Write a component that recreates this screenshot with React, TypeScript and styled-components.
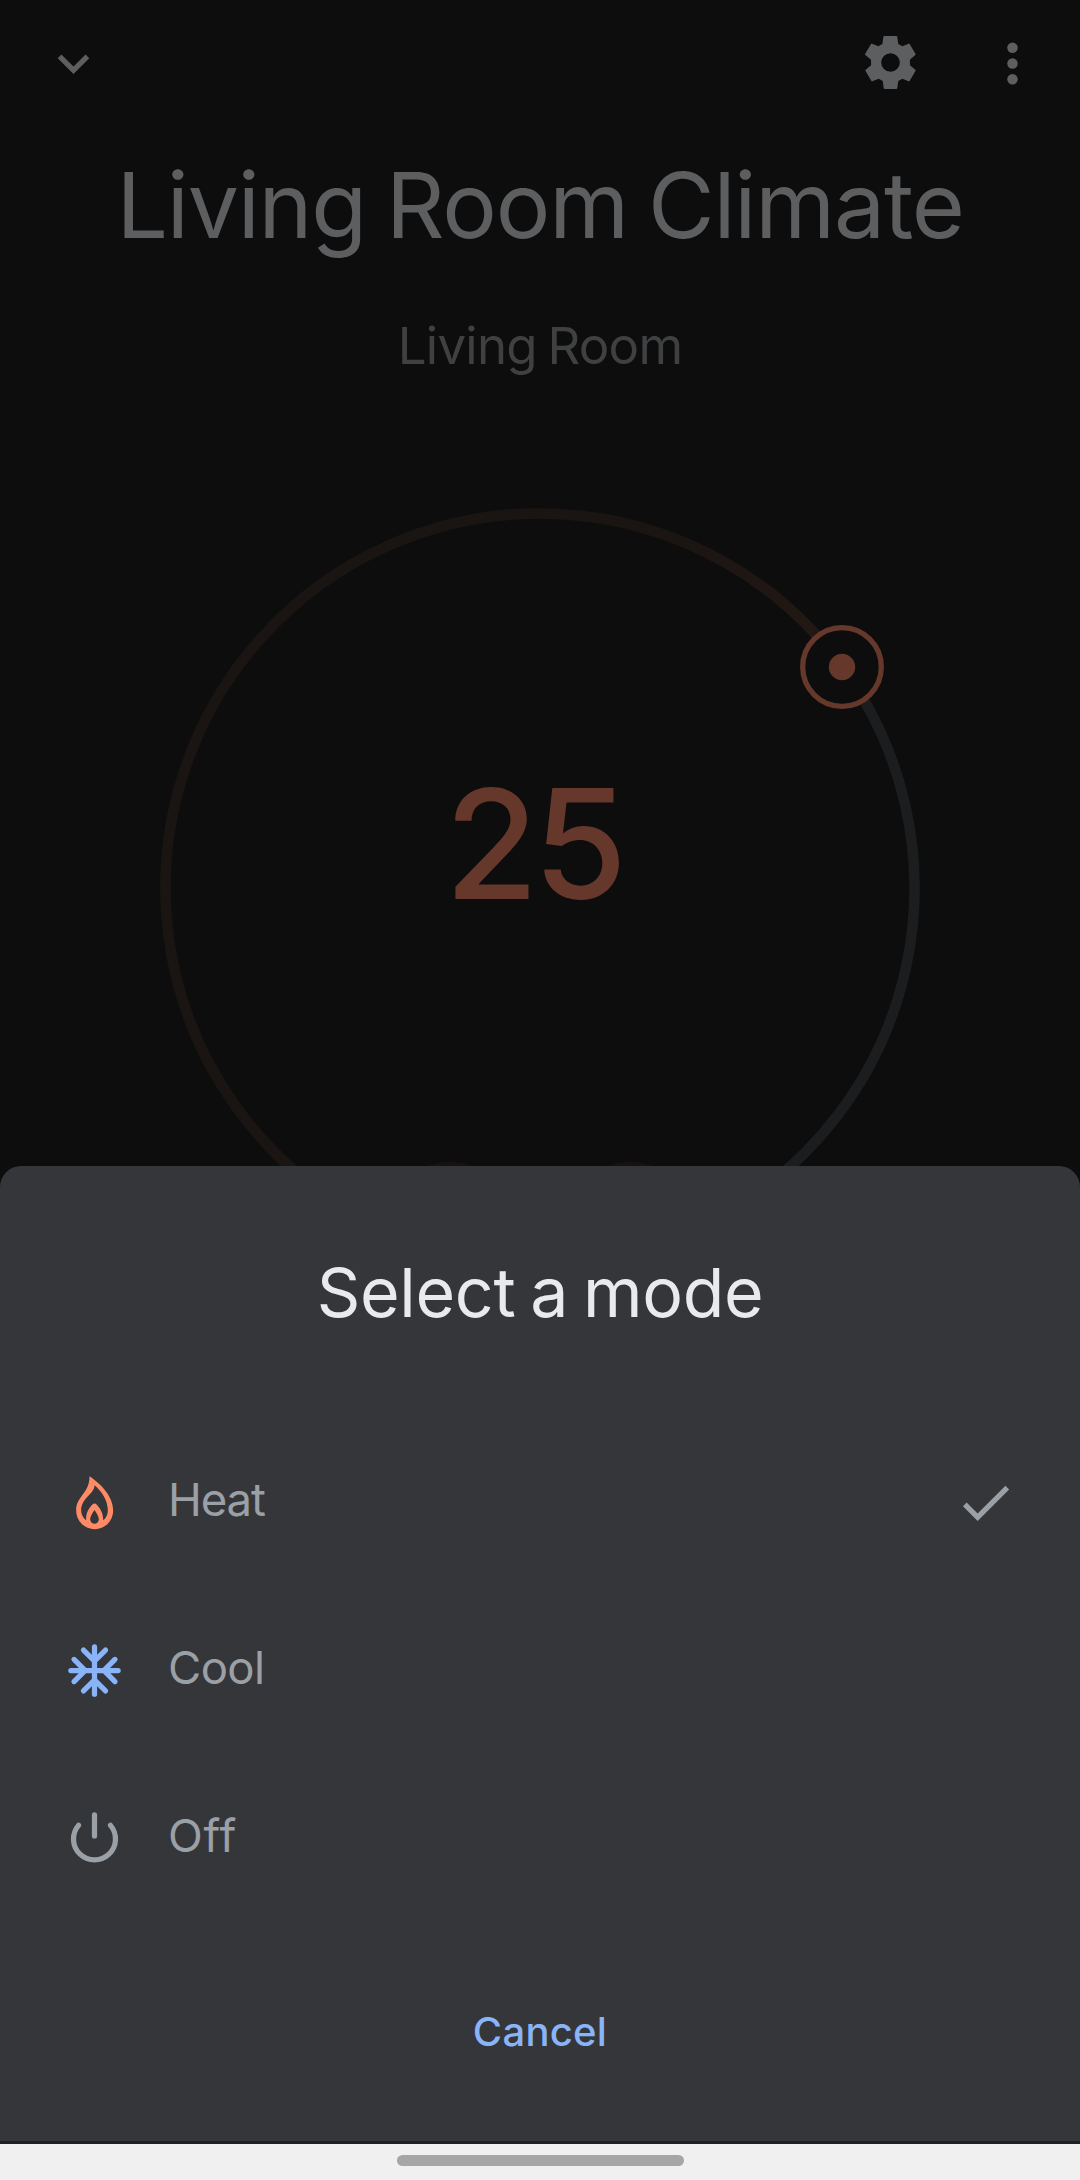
import React from "react";
import styled, { createGlobalStyle } from "styled-components";

const GlobalStyle = createGlobalStyle`
  *, *::before, *::after { box-sizing: border-box; }
  body {
    margin: 0;
    background: #0d0d0d;
    font-family: Inter, Roboto, "Liberation Sans", sans-serif;
    -webkit-font-smoothing: antialiased;
  }
  button { margin: 0; padding: 0; border: 0; background: none; font: inherit; color: inherit; }
  svg { display: block; }
`;

const Screen = styled.div`
  position: relative;
  width: 1080px;
  height: 2180px;
  overflow: hidden;
  background: #0d0d0d;
`;

const Page = styled.main`
  display: flex;
  flex-direction: column;
  align-items: center;
  color: #5d5e60;
`;

const TopBar = styled.header`
  display: flex;
  align-items: center;
  width: 100%;
  height: 127px;
  padding: 0 36px 0 42px;
`;

const Spacer = styled.div`
  flex: 1;
`;

const IconButton = styled.button<{ $gap?: number; $lift?: number }>`
  display: flex;
  width: 63px;
  height: 63px;
  margin-right: ${(p) => p.$gap ?? 0}px;
  margin-bottom: ${(p) => p.$lift ?? 0}px;
`;

const Icon = styled.svg`
  width: 63px;
  height: 63px;
  flex: none;
`;

const Title = styled.h1`
  margin: 23px 0 0;
  font-size: 91.2px;
  font-weight: 400;
  line-height: 110px;
  letter-spacing: -1.2px;
  word-spacing: -4.3px;
  white-space: nowrap;
`;

const RoomName = styled.div`
  margin-top: 56px;
  color: #3f4042;
  font-size: 51px;
  line-height: 60px;
  letter-spacing: -0.75px;
  word-spacing: -3px;
  white-space: nowrap;
`;

const Dial = styled.div`
  display: grid;
  place-items: center;
  width: 772px;
  height: 772px;
  margin-top: 126px;

  & > * { grid-area: 1 / 1; }
`;

const Ring = styled.svg`
  width: 772px;
  height: 772px;
  overflow: visible;
`;

const Temperature = styled.div`
  padding: 0 13px 89px 0;
  color: #65382b;
  font-size: 152px;
  font-weight: 500;
  line-height: 180px;
  letter-spacing: -5px;
`;

const Steppers = styled.div`
  display: flex;
  gap: 48px;
  margin-top: -112px;
`;

const Stepper = styled.button`
  width: 132px;
  height: 132px;
  border: 4px solid #171211;
  border-radius: 50%;
`;

const Overlay = styled.div`
  position: absolute;
  inset: 0;
  display: flex;
  flex-direction: column;
  justify-content: flex-end;
`;

const Sheet = styled.section`
  display: flex;
  flex-direction: column;
  height: 978px;
  padding-top: 86px;
  border-bottom: 3px solid #202124;
  border-radius: 21px 21px 0 0;
  background: #35363a;
`;

const SheetTitle = styled.h2`
  margin: 0;
  color: #e8eaed;
  font-size: 68px;
  font-weight: 400;
  line-height: 80px;
  letter-spacing: -0.3px;
  word-spacing: -4px;
  text-align: center;
`;

const ModeList = styled.div`
  display: flex;
  flex-direction: column;
  margin-top: 86px;
`;

const ModeRow = styled.button`
  display: flex;
  align-items: center;
  height: 168px;
  padding: 0 63px;
  color: #9aa0a6;
`;

const ModeLabel = styled.span<{ $tracking: number }>`
  flex: 1;
  margin-left: 42px;
  padding-bottom: 5px;
  font-size: 45.5px;
  line-height: 56px;
  letter-spacing: ${(p) => p.$tracking}px;
  text-align: left;
`;

const CancelButton = styled.button`
  align-self: center;
  height: 96px;
  margin-top: 61px;
  color: #8ab4f8;
  font-size: 40px;
  font-weight: 500;
  letter-spacing: 0.26px;
`;

const NavBar = styled.div`
  display: flex;
  justify-content: center;
  height: 36px;
  padding-top: 11px;
  background: #f0f0f0;
`;

const NavHandle = styled.div`
  width: 287px;
  height: 11px;
  border-radius: 6px;
  background: #a6a6a6;
`;

const ChevronIcon = () => (
  <Icon viewBox="0 0 24 24" fill="currentColor">
    <path d="M16.59 8.59L12 13.17 7.41 8.59 6 10l6 6 6-6z" />
  </Icon>
);

const GearIcon = () => (
  <Icon viewBox="11.5 9 189 189" fill="currentColor">
    <path
      fillRule="evenodd"
      d="M88 24h36q2 0 2.300 2l3 22 12 7 19-8q2-1 3 1l18 30q1 2-1 3l-16 14v17l16 13q2 1 1 3l-18 31q-1 2-3 1l-19-8-12 7-3 22q-.3 2-2.300 2H88q-2 0-2.300-2l-3-22-12-7-19 8q-2 1-3-1l-18-31q-1-2 1-3l16-13V95L30.700 81q-2-1-1-3l18-30q1-2 3-1l19 8 12-7 3-22q.3-2 2.300-2zM106 75.500a28 28 0 1 0 0 56 28 28 0 1 0 0-56z"
    />
  </Icon>
);

const MoreIcon = () => (
  <Icon viewBox="0 0 24 24" fill="currentColor">
    <circle cx="12" cy="6" r="2" />
    <circle cx="12" cy="12" r="2" />
    <circle cx="12" cy="18" r="2" />
  </Icon>
);

const FlameIcon = () => (
  <Icon viewBox="68.5 63 189 189" fill="#ff8b66">
    <path
      fillRule="evenodd"
      d="M148 79C171 94 219 133 219 182A55.500 55.500 0 0 1 108 182C108 138 148 132 148 79ZM163 106C163 133 123 143 123 182C123 193 129 204 138 211C136 188 148 173 156 164Q163 157 170 164C178 173 190 188 189 211C198 204 203 193 203 182C203 150 184 124 163 106ZM163 180C156 190 150 200 150 208A13 13 0 0 0 176 208C176 200 170 190 163 180Z"
    />
  </Icon>
);

const SnowIcon = () => (
  <Icon viewBox="0 0 24 24" fill="none" stroke="#8ab4f8" strokeWidth="2" strokeLinecap="round">
    <path d="M12 3v18M3 12h18M7.800 4.200L12 8.400l4.200-4.200M7.800 19.800L12 15.600l4.200 4.200M4.200 7.800L8.400 12l-4.200 4.200M19.800 7.800L15.600 12l4.200 4.200" />
  </Icon>
);

const PowerIcon = () => (
  <Icon viewBox="0 0 24 24" fill="none" stroke="currentColor" strokeWidth="2" strokeLinecap="round">
    <path d="M12 3v8M5.900 7A8 8 0 1 0 18.100 7" />
  </Icon>
);

const CheckIcon = () => (
  <Icon viewBox="0 0 24 24" fill="currentColor">
    <path d="M9 16.170L4.830 12l-1.420 1.410L9 19 21 7l-1.410-1.410z" />
  </Icon>
);

const RADIUS = 374.5;
const polar = (degrees: number) => {
  const a = (degrees * Math.PI) / 180;
  return `${(386 + RADIUS * Math.cos(a)).toFixed(2)} ${(386 + RADIUS * Math.sin(a)).toFixed(2)}`;
};

const HANDLE_ANGLE = -36.2;

const TemperatureRing = () => (
  <Ring viewBox="0 0 772 772" fill="none" strokeWidth="10.5">
    <defs>
      <linearGradient id="warm" x1="500" y1="40" x2="670" y2="150" gradientUnits="userSpaceOnUse">
        <stop offset="0" stopColor="#1a1512" />
        <stop offset="1" stopColor="#231814" />
      </linearGradient>
    </defs>
    <path d={`M${polar(120)}A${RADIUS} ${RADIUS} 0 1 1 ${polar(HANDLE_ANGLE)}`} stroke="url(#warm)" />
    <path d={`M${polar(HANDLE_ANGLE)}A${RADIUS} ${RADIUS} 0 0 1 ${polar(60)}`} stroke="#1b1d1f" />
    <circle cx="688" cy="165" r="39.3" fill="#0d0d0d" stroke="#65382b" strokeWidth="5.3" />
    <circle cx="688" cy="165" r="13.2" fill="#65382b" />
  </Ring>
);

const modes = [
  { label: "Heat", icon: <FlameIcon />, tracking: -1.1, selected: true },
  { label: "Cool", icon: <SnowIcon />, tracking: -0.6, selected: false },
  { label: "Off", icon: <PowerIcon />, tracking: 0.8, selected: false },
];

export default function App() {
  return (
    <Screen>
      <GlobalStyle />
      <Page>
        <TopBar>
          <IconButton aria-label="Collapse"><ChevronIcon /></IconButton>
          <Spacer />
          <IconButton aria-label="Settings" $gap={59} $lift={2}><GearIcon /></IconButton>
          <IconButton aria-label="More options"><MoreIcon /></IconButton>
        </TopBar>
        <Title>Living Room Climate</Title>
        <RoomName>Living Room</RoomName>
        <Dial>
          <TemperatureRing />
          <Temperature>25</Temperature>
        </Dial>
        <Steppers>
          <Stepper aria-label="Decrease" />
          <Stepper aria-label="Increase" />
        </Steppers>
      </Page>
      <Overlay>
        <Sheet>
          <SheetTitle>Select a mode</SheetTitle>
          <ModeList>
            {modes.map((mode) => (
              <ModeRow key={mode.label}>
                {mode.icon}
                <ModeLabel $tracking={mode.tracking}>{mode.label}</ModeLabel>
                {mode.selected && <CheckIcon />}
              </ModeRow>
            ))}
          </ModeList>
          <CancelButton>Cancel</CancelButton>
        </Sheet>
        <NavBar><NavHandle /></NavBar>
      </Overlay>
    </Screen>
  );
}
